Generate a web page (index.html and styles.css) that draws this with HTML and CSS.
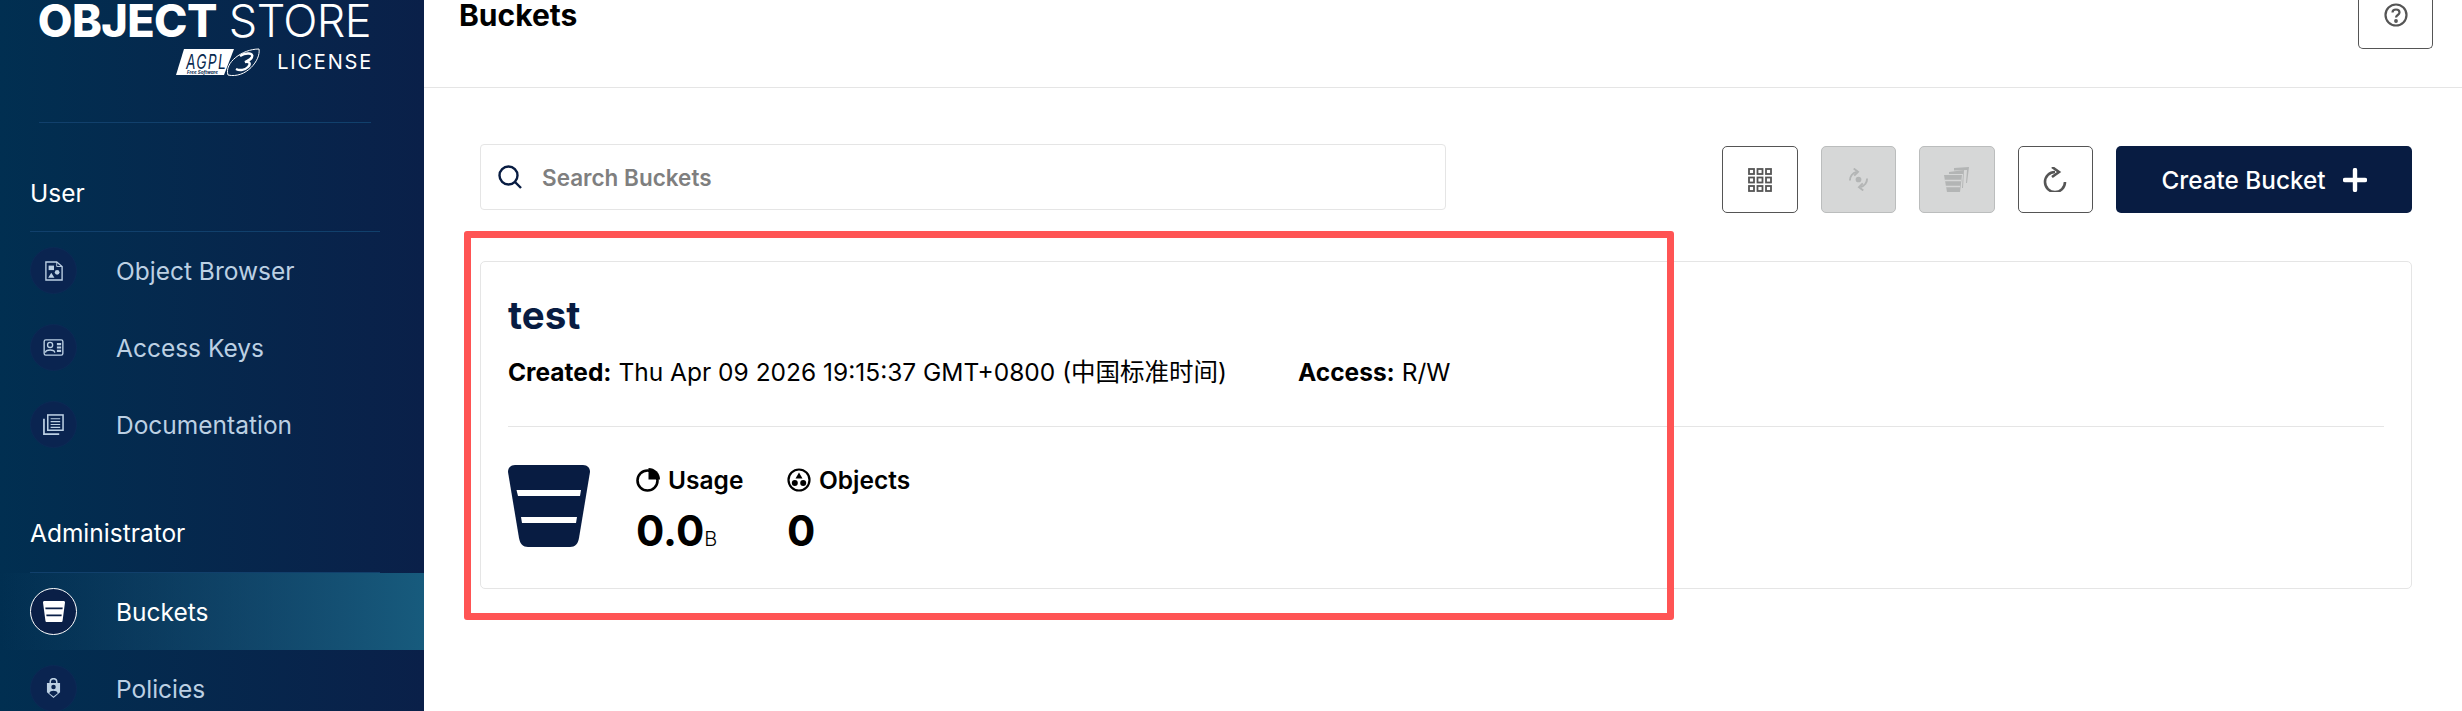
FILE: index.html
```html
<!DOCTYPE html>
<html lang="en">
<head>
    <meta charset="UTF-8">
    <meta name="viewport" content="width=device-width, initial-scale=1.0">
    <title>Buckets</title>
    <link rel="stylesheet" href="styles.css">
</head>
<body>
    <aside class="sidebar">
        <div class="logo">
            <div class="logo-name"><b>OBJECT</b> STORE</div>
            <div class="logo-license">
                <svg class="agpl" viewBox="0 0 84 28" width="84" height="28">
                    <path d="M8 1H58L48 27H0Z" fill="#fff"/>
                    <text x="10" y="21" class="agpl-text" textLength="41" lengthAdjust="spacingAndGlyphs">AGPL</text>
                    <text x="11" y="25.500" class="agpl-small" textLength="31" lengthAdjust="spacingAndGlyphs">Free Software</text>
                    <path d="M52 27C48 15 66 1 83 1C85 12 70 31 52 27Z" fill="#0a2a50" stroke="#fff" stroke-width="1"/>
                    <path d="M64 8C70 4 78 5 76 9C75 12 71 13 69 14C74 13 75 16 72 19C69 22 64 23 60 21" fill="none" stroke="#fff" stroke-width="2.400"/>
                </svg>
                <span>LICENSE</span>
            </div>
        </div>
        <div class="logo-rule"></div>

        <h2 class="menu-title">User</h2>
        <a class="menu-item">
            <span class="menu-icon">
                <svg viewBox="0 0 20 22" width="18" height="20" fill="none">
                    <path d="M1 1H13L19 6V21H1Z" stroke="#bcd0e3" stroke-width="1.500"/>
                    <path d="M13 1V6H19" stroke="#bcd0e3" stroke-width="1"/>
                    <rect x="4" y="5" width="6" height="5" fill="#bcd0e3"/>
                    <circle cx="13.500" cy="12.500" r="2.600" fill="#bcd0e3"/>
                    <path d="M7 13L10.500 18.500H3.500Z" fill="#bcd0e3"/>
                </svg>
            </span>
            Object Browser
        </a>
        <a class="menu-item">
            <span class="menu-icon">
                <svg viewBox="0 0 24 20" width="21" height="17" fill="none" stroke="#bcd0e3" stroke-width="1.600">
                    <rect x="1" y="1" width="22" height="18" rx="2"/>
                    <circle cx="8" cy="7" r="3"/>
                    <path d="M2.500 16C3 12 13 12 13.500 16"/>
                    <path d="M16 6H21M16 10H21M16 14H21" stroke-width="2.600"/>
                </svg>
            </span>
            Access Keys
        </a>
        <a class="menu-item">
            <span class="menu-icon">
                <svg viewBox="0 0 22 22" width="21" height="21" fill="none" stroke="#bcd0e3">
                    <rect x="5" y="1" width="16" height="16" stroke-width="1.600"/>
                    <path d="M8 5H18M8 8H18M8 11H18M8 14H18" stroke-width="1.200"/>
                    <path d="M1 5V21H17" stroke-width="1.800"/>
                </svg>
            </span>
            Documentation
        </a>

        <h2 class="menu-title menu-title-admin">Administrator</h2>
        <a class="menu-item active">
            <span class="menu-icon">
                <svg viewBox="0 0 22 21" width="22" height="21">
                    <path d="M1.500 0H20.500C21.500 0 22 .6 22 1.500L19.600 19.400C19.500 20.400 19 21 18 21H4C3 21 2.500 20.400 2.400 19.400L0 1.500C0 .6 .5 0 1.500 0Z" fill="#fff"/>
                    <path d="M2.300 6.500H19.700L19.500 8.300H2.500ZM3.300 13.500H18.700L18.500 15.300H3.500Z" fill="#0a1f47"/>
                </svg>
            </span>
            Buckets
        </a>
        <a class="menu-item">
            <span class="menu-icon">
                <svg viewBox="0 0 16 22" width="15" height="21">
                    <path d="M4.500 5V4A3.500 3.500 0 0 1 11.500 4V5" fill="none" stroke="#bcd0e3" stroke-width="1.600"/>
                    <path d="M1 5H15V15L8 21L1 15Z" fill="#bcd0e3"/>
                    <circle cx="8" cy="9.500" r="2.400" fill="#0a2450"/>
                    <path d="M3.500 16C4 12.500 12 12.500 12.500 16L8 19.500Z" fill="#0a2450"/>
                </svg>
            </span>
            Policies
        </a>
    </aside>

    <main class="main">
        <header class="page-header">
            <h1>Buckets</h1>
            <button class="help-btn">
                <svg viewBox="0 0 24 24" width="24" height="24" fill="none" stroke="#555" stroke-width="2.200">
                    <circle cx="12" cy="12" r="10.500"/>
                    <path d="M8.500 9.500C8.500 5.500 15.500 5.500 15.500 9.500C15.500 12 12 12 12 14.500"/>
                    <circle cx="12" cy="18" r=".8" fill="#555"/>
                </svg>
            </button>
        </header>

        <section class="content">
            <div class="toolbar">
                <div class="search">
                    <svg viewBox="0 0 24 24" width="24" height="24" fill="none" stroke="#081c42" stroke-width="2.400">
                        <circle cx="10.500" cy="10.500" r="9"/>
                        <path d="M17 17L23 23"/>
                    </svg>
                    <span>Search Buckets</span>
                </div>
                <div class="actions">
                    <button class="tool-btn">
                        <svg viewBox="0 0 24 24" width="24" height="24" fill="none" stroke="#555" stroke-width="1.800">
                            <rect x="1" y="1" width="5" height="5"/><rect x="9.500" y="1" width="5" height="5"/><rect x="18" y="1" width="5" height="5"/>
                            <rect x="1" y="9.500" width="5" height="5"/><rect x="9.500" y="9.500" width="5" height="5"/><rect x="18" y="9.500" width="5" height="5"/>
                            <rect x="1" y="18" width="5" height="5"/><rect x="9.500" y="18" width="5" height="5"/><rect x="18" y="18" width="5" height="5"/>
                        </svg>
                    </button>
                    <button class="tool-btn disabled">
                        <svg viewBox="0 0 22 24" width="21" height="23" fill="none" stroke="#b3b5b5" stroke-width="2">
                            <path d="M2 13A9 9 0 0 1 9 4"/><path d="M6 .5L10.500 4L6.500 8"/>
                            <path d="M20 11A9 9 0 0 1 13 20"/><path d="M16 23.500L11.500 20L15.500 16"/>
                            <circle cx="11" cy="12" r="3" fill="#b3b5b5" stroke="none"/>
                        </svg>
                    </button>
                    <button class="tool-btn disabled">
                        <svg viewBox="0 0 26 25" width="26" height="25">
                            <path d="M10 1L25 0L23 16H22L23 3L10 3.500Z" fill="#b3b5b5"/>
                            <path d="M5 5L20 3L19 21H18L19 7L5 7Z" fill="#b3b5b5"/>
                            <path d="M0 8H18L16 25H3Z" fill="#b3b5b5"/>
                            <path d="M1 13.500H17M2 19.500H16" stroke="#d6d7d7" stroke-width="1.400"/>
                        </svg>
                    </button>
                    <button class="tool-btn">
                        <svg viewBox="0 0 24 25" width="24" height="25" fill="none" stroke="#555" stroke-width="2.600">
                            <path d="M12 5A10 10 0 1 0 22 15"/>
                            <path d="M9 0L16 5L9 10"/>
                        </svg>
                    </button>
                    <button class="create-btn">
                        Create Bucket
                        <svg viewBox="0 0 24 24" width="24" height="24" fill="none" stroke="#fff" stroke-width="4.400" stroke-linecap="round">
                            <path d="M12 2V22M2 12H22"/>
                        </svg>
                    </button>
                </div>
            </div>

            <article class="bucket-card">
                <h3 class="bucket-name">test</h3>
                <div class="bucket-meta">
                    <span><b>Created:</b> Thu Apr 09 2026 19:15:37 GMT+0800 (中国标准时间)</span>
                    <span><b>Access:</b> R/W</span>
                </div>
                <div class="bucket-stats">
                    <svg class="bucket-icon" viewBox="0 0 82 82" width="82" height="82">
                        <path d="M7 0H75C79.500 0 82 3 82 7L71 73C70 79 67 82 62 82H20C15 82 12 79 11 73L0 7C0 3 2.500 0 7 0Z" fill="#081c42"/>
                        <path d="M8.500 25H73L72 31H10ZM13 52H69L68 58H14Z" fill="#fff"/>
                    </svg>
                    <div class="stat stat-usage">
                        <div class="stat-label">
                            <svg viewBox="0 0 24 24" width="24" height="24">
                                <circle cx="11.500" cy="12.500" r="10" fill="none" stroke="#000" stroke-width="2.600"/>
                                <path d="M12.500 0A11.500 11.500 0 0 1 24 11.500H12.500Z" fill="#000"/>
                            </svg>
                            Usage
                        </div>
                        <div class="stat-value">0.0<small>B</small></div>
                    </div>
                    <div class="stat">
                        <div class="stat-label">
                            <svg viewBox="0 0 24 24" width="24" height="24">
                                <circle cx="12" cy="12" r="10.500" fill="none" stroke="#000" stroke-width="2.200"/>
                                <path d="M12 4.500L15.500 10.500H8.500Z" fill="#000"/>
                                <circle cx="7.800" cy="15" r="3" fill="#000"/>
                                <circle cx="16.200" cy="15" r="3" fill="#000"/>
                            </svg>
                            Objects
                        </div>
                        <div class="stat-value">0</div>
                    </div>
                </div>
            </article>
        </section>
    </main>

    <div class="highlight"></div>
</body>
</html>
```

FILE: styles.css
```css
* {
    box-sizing: border-box;
}

body {
    font-family: Inter, "Noto Sans CJK SC", sans-serif;
    background-color: #fff;
    color: #000;
    display: flex;
    height: 100vh;
    margin: 0;
    overflow: hidden;
}

.sidebar {
    width: 424px;
    height: 100vh;
    flex-shrink: 0;
    overflow: hidden;
    background: linear-gradient(90deg, #012f51 0%, #0a2049 100%);
    color: #fff;
}

.logo {
    display: flex;
    flex-direction: column;
    align-items: flex-end;
    margin: 0 53px 0 39px;
    padding-top: 1px;
}

.logo-name {
    font-size: 45px;
    font-weight: 300;
    line-height: 40px;
    white-space: nowrap;
    letter-spacing: -0.6px;
}

.logo-name b {
    font-weight: 800;
}

.logo-license {
    display: flex;
    align-items: center;
    gap: 17px;
    margin: 7px -2px 0 0;
    font-size: 20px;
    letter-spacing: 1.8px;
    line-height: 28px;
}

.agpl-text {
    font-size: 20px;
    font-style: italic;
    font-weight: 400;
    fill: #0a2a50;
}

.agpl-small {
    font-size: 4.5px;
    font-weight: 700;
    font-style: italic;
    letter-spacing: 0;
    fill: #0a2a50;
}

.logo-rule {
    height: 1px;
    margin: 46px 53px 0 39px;
    background: #11406c;
}

.menu-title {
    margin: 50px 44px 0 30px;
    padding-bottom: 18px;
    border-bottom: 1px solid #11406c;
    font-size: 24.5px;
    font-weight: 400;
    line-height: 40px;
}

.menu-title-admin {
    padding-bottom: 19px;
}

.menu-item {
    display: flex;
    align-items: center;
    gap: 39px;
    height: 77px;
    padding-left: 30px;
    color: #bcd0e3;
    font-size: 24.5px;
}

.menu-icon {
    display: flex;
    align-items: center;
    justify-content: center;
    width: 47px;
    height: 47px;
    border-radius: 50%;
    background: #0a2450;
    border: 1px solid #0b2a55;
}

.menu-item.active {
    color: #fff;
    background: linear-gradient(90deg, rgba(23, 91, 125, 0) 0%, #175b7d 100%);
}

.menu-item.active .menu-icon {
    background: #0a1f47;
    border-color: #fff;
}

.main {
    flex: 1;
    min-width: 0;
}

.page-header {
    display: flex;
    justify-content: space-between;
    align-items: flex-start;
    height: 88px;
    padding: 0 29px 0 35px;
    border-bottom: 1px solid #e5e5e5;
}

.page-header h1 {
    margin: -5px 0 0;
    font-size: 30px;
    font-weight: 700;
    line-height: 40px;
}

.help-btn {
    display: flex;
    align-items: center;
    justify-content: center;
    width: 75px;
    height: 49px;
    padding: 0 0 18px;
    background: #fff;
    border: 1px solid #555;
    border-top: 0;
    border-radius: 0 0 5px 5px;
}

.content {
    padding: 56px 50px 0 56px;
}

.toolbar {
    display: flex;
    justify-content: space-between;
    align-items: flex-start;
}

.search {
    display: flex;
    align-items: center;
    gap: 20px;
    width: 966px;
    height: 66px;
    padding-left: 17px;
    border: 1px solid #e5e5e5;
    border-radius: 4px;
    color: #7f7f7f;
    font-size: 22.5px;
    font-weight: 600;
}

.actions {
    display: flex;
    gap: 23px;
    margin-top: 2px;
}

.tool-btn {
    display: flex;
    align-items: center;
    justify-content: center;
    width: 75.5px;
    height: 67px;
    padding: 0;
    background: #fff;
    border: 1px solid #555;
    border-radius: 5px;
}

.tool-btn.disabled {
    background: #d6d7d7;
    border-color: #bbbdbd;
}

.create-btn {
    display: flex;
    align-items: center;
    justify-content: center;
    gap: 17px;
    width: 296px;
    height: 67px;
    padding: 0;
    background: #081c42;
    border: 0;
    border-radius: 5px;
    color: #fff;
    font-family: inherit;
    font-size: 24.3px;
    font-weight: 500;
}

.bucket-card {
    height: 328px;
    margin-top: 48px;
    padding: 33px 27px 0;
    border: 1px solid #e5e5e5;
    border-radius: 5px;
}

.bucket-name {
    margin: 0;
    color: #081c42;
    font-size: 38.5px;
    font-weight: 700;
    line-height: 40px;
}

.bucket-meta {
    display: flex;
    gap: 71px;
    padding: 22px 0 39px;
    border-bottom: 1px solid #e5e5e5;
    font-size: 24.5px;
    line-height: 30px;
}

.bucket-stats {
    display: flex;
    margin-top: 38px;
}

.bucket-icon {
    margin-right: 46px;
}

.stat-usage {
    width: 151px;
}

.stat-label {
    display: flex;
    align-items: center;
    gap: 8px;
    font-size: 24.5px;
    font-weight: 600;
    line-height: 30px;
}

.stat-value {
    margin-top: 11px;
    font-size: 42px;
    font-weight: 700;
    line-height: 50px;
}

.stat-value small {
    font-size: 20px;
    font-weight: 300;
}

.highlight {
    position: absolute;
    left: 464px;
    top: 231px;
    width: 1210px;
    height: 389px;
    border: 7px solid #ff5454;
    border-radius: 3px;
    pointer-events: none;
}
```
